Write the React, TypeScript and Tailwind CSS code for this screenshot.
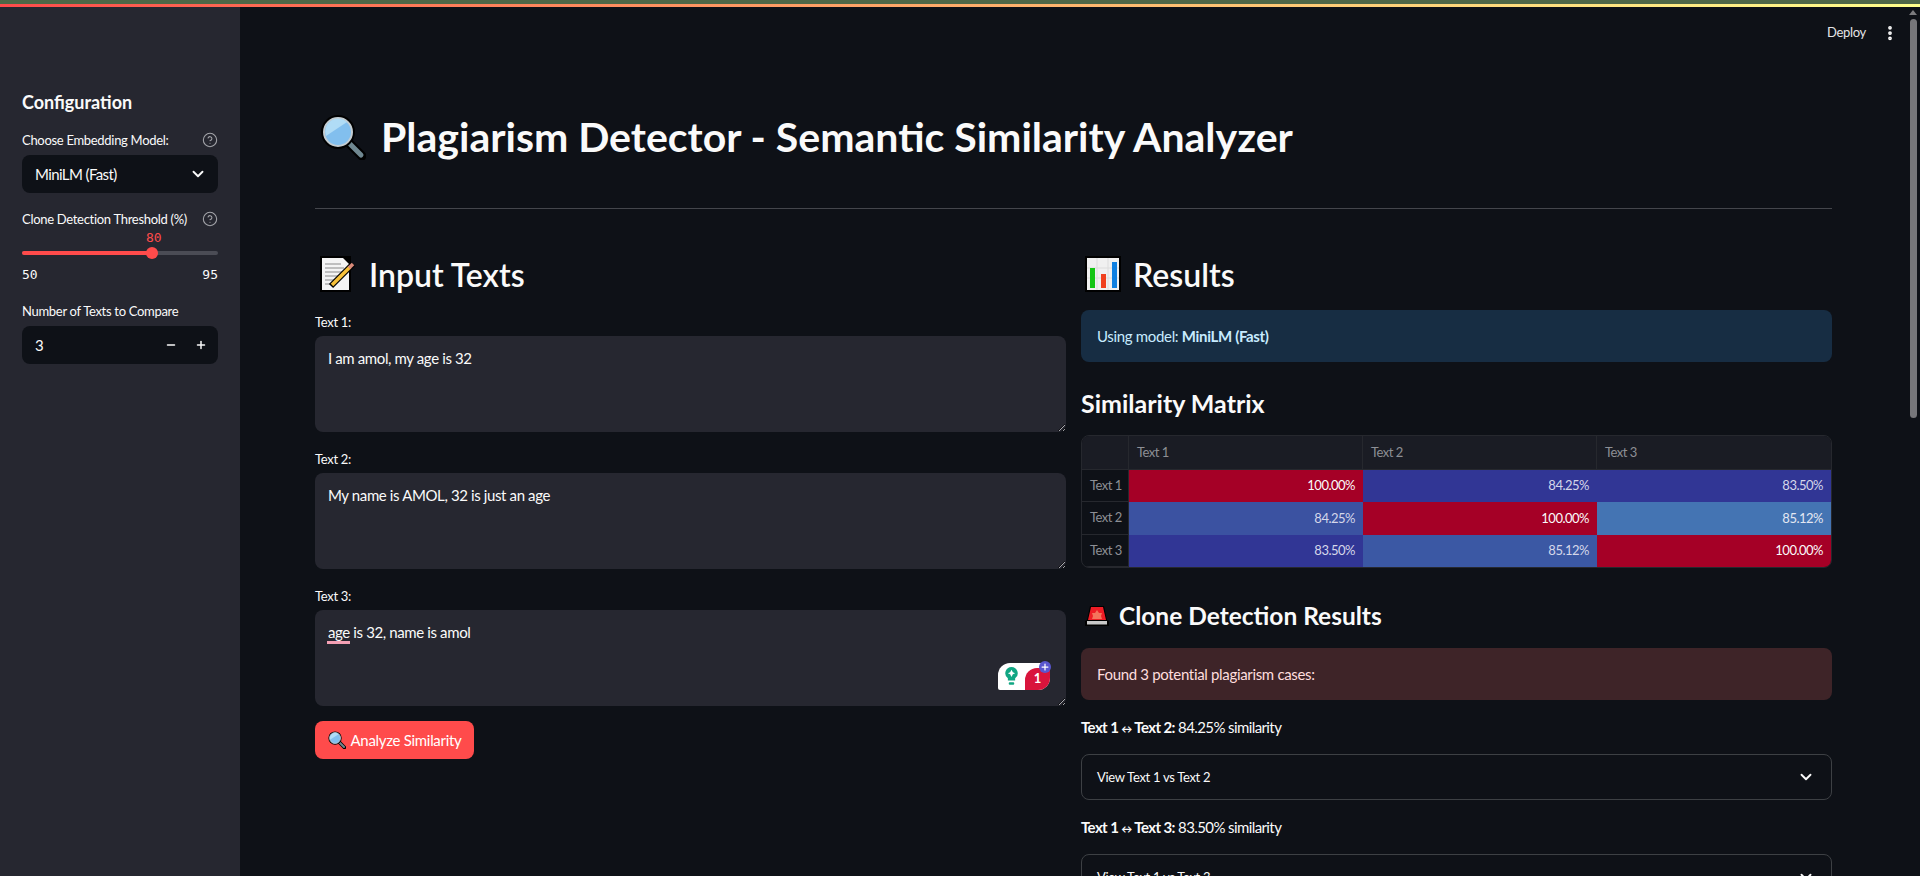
import { ChevronDown, CircleHelp, EllipsisVertical, Minus, Plus } from "lucide-react";

const sans = "font-['Lato','Noto_Sans',sans-serif]";

function SearchEmoji({ size }: { size: number }) {
  return (
    <svg width={size} height={size} viewBox="0 0 46 46" className="shrink-0">
      <path d="M29 29 L42 42" stroke="#000" strokeWidth="9" strokeLinecap="round" />
      <path d="M30 30 L41 41" stroke="#6f8790" strokeWidth="5" strokeLinecap="round" />
      <circle cx="18" cy="18" r="17" fill="#000" />
      <circle cx="18" cy="18" r="14" fill="#82bfee" stroke="#c4cdd2" strokeWidth="2" />
      <path d="M6 22 A13 13 0 0 1 27 8 Z" fill="#b0dcf6" />
    </svg>
  );
}

function MemoEmoji() {
  return (
    <svg width="38" height="38" viewBox="0 0 38 38" className="shrink-0">
      <rect x="1" y="1" width="31" height="36" fill="#000" />
      <path d="M3 3 H24 L30 9 V35 H3 Z" fill="#f4f4f4" />
      <path d="M6 9 H22 M6 13 H25 M6 17 H25 M6 21 H25 M6 25 H18 M6 29 H14" stroke="#8a8a8a" strokeWidth="1" />
      <path d="M12 31 L34 9" stroke="#000" strokeWidth="6" />
      <path d="M13 30 L31 12" stroke="#f8c23a" strokeWidth="3.5" />
      <path d="M30 13 L34 9" stroke="#d98a7a" strokeWidth="3.5" />
    </svg>
  );
}

function ChartEmoji() {
  return (
    <svg width="36" height="36" viewBox="0 0 36 36" className="shrink-0">
      <rect width="36" height="36" fill="#000" />
      <rect x="2" y="2" width="32" height="32" fill="#f0f0f0" />
      <path d="M2 12 H34 M2 22 H34 M12 2 V34 M23 2 V34" stroke="#dcdcdc" strokeWidth="1" />
      <rect x="5" y="12" width="5" height="20" fill="#14c514" />
      <rect x="16" y="18" width="5" height="14" fill="#f0401e" />
      <rect x="27" y="6" width="5" height="26" fill="#0f7fe0" />
    </svg>
  );
}

function SirenEmoji() {
  return (
    <svg width="26" height="22" viewBox="0 0 26 22" className="shrink-0">
      <path d="M1 21 V16 L3 15 L6 1 H20 L23 15 L25 16 V21 Z" fill="#000" />
      <path d="M4 15 L7 2 H19 L22 15 Z" fill="#ee1c25" />
      <path d="M13 5 L15 8 L18 8 L17 11 L18 14 H8 L9 11 L8 8 L11 8 Z" fill="#f5735c" />
      <rect x="3" y="16" width="20" height="3.5" fill="#c8c8c8" />
    </svg>
  );
}

function Label({ children, help }: { children: React.ReactNode; help?: boolean }) {
  return (
    <div className="flex h-[21px] items-center justify-between text-[13px] leading-[21px] tracking-[-0.3px] text-[#fafafa]">
      <span className="pt-[2px]">{children}</span>
      {help && <CircleHelp size={16} strokeWidth={1.6} className="text-[#a3a4a9]" />}
    </div>
  );
}

function TextBox({ label, value, children }: { label: string; value: string; children?: React.ReactNode }) {
  return (
    <div className="flex flex-col">
      <div className="mb-[4px] flex h-[21px] items-center pt-[2px] text-[13px] tracking-[-0.3px] text-[#fafafa]">{label}</div>
      <div className="relative h-[96px]">
        <textarea
          defaultValue={value}
          spellCheck={false}
          className="block h-full w-full rounded-lg bg-[#262730] px-[13px] pb-[13px] pt-[11px] text-[15px] leading-[22px] tracking-[-0.38px] text-[#fafafa] outline-none"
        />
        {children}
      </div>
    </div>
  );
}

function GrammarlyBadge() {
  return (
    <div className="absolute bottom-[16px] right-[16px] flex h-[27px] w-[52px] items-end justify-between rounded-tl-[12px] rounded-br-[12px] rounded-tr-[3px] rounded-bl-[2px] bg-white">
      <svg width="15" height="20" viewBox="0 0 16 22" className="mb-[4px] ml-[6px]">
        <path d="M8 1 a7 7 0 0 1 4 12.6 V16 H4 V13.6 A7 7 0 0 1 8 1 Z" fill="#11a683" />
        <path d="M8 4 L9.5 7 L12 8 L9.5 9 L8 12 L6.5 9 L4 8 L6.5 7 Z" fill="#fff" />
        <rect x="5" y="18" width="6" height="2.5" rx="1" fill="#11a683" />
      </svg>
      <div className="flex h-[22px] w-[25px] items-center justify-center rounded-tl-[12px] rounded-br-[12px] bg-[#d9143c] text-[13px] font-bold text-white">1</div>
      <div className="absolute -right-[1px] -top-[2px] flex h-[12px] w-[12px] items-center justify-center rounded-full bg-[#5a57d0]">
        <Plus size={10} strokeWidth={3} className="text-white" />
      </div>
    </div>
  );
}

function Sidebar() {
  return (
    <aside className="flex w-[240px] shrink-0 flex-col bg-[#262730] px-[22px] pt-[81px]">
      <h2 className="mb-[13px] text-[18px] font-bold leading-[28px] text-[#fafafa]">Configuration</h2>
      <div className="mb-[5px]">
        <Label help>Choose Embedding Model:</Label>
      </div>
      <div className="flex h-[38px] items-center justify-between rounded-lg bg-[#0e1117] pl-[13px] pr-[11px] text-[15px] tracking-[-0.6px] text-[#fafafa]">
        <span>MiniLM (Fast)</span>
        <ChevronDown size={18} strokeWidth={2.5} />
      </div>
      <div className="mt-[15px]">
        <Label help>Clone Detection Threshold (%)</Label>
      </div>
      <div className="relative h-[27px]">
        <span className="absolute left-[124px] top-0 font-['DejaVu_Sans_Mono',monospace] text-[13px] leading-[17px] text-[#ff4b4b]">80</span>
        <div className="absolute left-0 right-0 top-[22px] h-[4px] rounded-full bg-[#4b4c55]">
          <div className="h-full w-[130px] rounded-full bg-[#ff4b4b]" />
        </div>
        <div className="absolute left-[124px] top-[18px] h-[12px] w-[12px] rounded-full bg-[#ff4b4b]" />
      </div>
      <div className="mt-[10px] flex justify-between font-['DejaVu_Sans_Mono',monospace] text-[13px] leading-[17px] text-[#fafafa]">
        <span>50</span>
        <span>95</span>
      </div>
      <div className="mb-[5px] mt-[17px]">
        <Label>Number of Texts to Compare</Label>
      </div>
      <div className="flex h-[38px] items-center rounded-lg bg-[#0e1117] pl-[13px] pr-[11px] text-[15px] text-[#fafafa]">
        <span className="flex-1">3</span>
        <Minus size={12} strokeWidth={3} className="mr-[18px]" />
        <Plus size={12} strokeWidth={3} />
      </div>
    </aside>
  );
}

const matrix = [
  { name: "Text 1", cells: [["100.00%", "bg-[#a50026] text-[#fafafa]"], ["84.25%", "bg-[#313695] text-[#d5d7ea]"], ["83.50%", "bg-[#313695] text-[#d5d7ea]"]] },
  { name: "Text 2", cells: [["84.25%", "bg-[#3b52a1] text-[#d5d7ea]"], ["100.00%", "bg-[#a50026] text-[#fafafa]"], ["85.12%", "bg-[#4474b3] text-[#e3e7f2]"]] },
  { name: "Text 3", cells: [["83.50%", "bg-[#313695] text-[#d5d7ea]"], ["85.12%", "bg-[#3b58a4] text-[#d5d7ea]"], ["100.00%", "bg-[#a50026] text-[#fafafa]"]] },
];

function Matrix() {
  return (
    <div className="flex h-[133px] flex-col overflow-hidden rounded-lg border border-[#26282e] text-[13px] tracking-[-0.5px] text-[#b0b2b6]">
      <div className="grid h-[34px] shrink-0 grid-cols-[47px_1fr_1fr_1fr] items-stretch border-b border-[#26282e] bg-[#1a1c24]">
        <div className="border-r border-[#26282e]" />
        {["Text 1", "Text 2", "Text 3"].map((h) => (
          <div key={h} className="flex items-center border-r border-[#26282e] pl-[8px] text-[#8d8f95] last:border-r-0">{h}</div>
        ))}
      </div>
      {matrix.map((row) => (
        <div key={row.name} className="grid flex-1 grid-cols-[47px_1fr_1fr_1fr]">
          <div className="flex items-center border-b border-r border-[#26282e] pl-[8px] text-[#8d8f95]">{row.name}</div>
          {row.cells.map(([v, cls], i) => (
            <div key={i} className={`flex items-center justify-end pr-[8px] ${cls}`}>{v}</div>
          ))}
        </div>
      ))}
    </div>
  );
}

function CloneCase({ a, b, pct }: { a: string; b: string; pct: string }) {
  return (
    <>
      <p className="mt-[15px] h-[24px] shrink-0 text-[15px] leading-[24px] tracking-[-0.6px] text-[#fafafa]">
        <b>{a} <span className="text-[11px]">↔</span> {b}:</b> {pct} similarity
      </p>
      <div className="mt-[15px] flex h-[46px] shrink-0 items-center justify-between rounded-lg border border-[#3d4044] pl-[15px] pr-[16px] text-[13px] tracking-[-0.3px] text-[#fafafa]">
        <span className="pt-[1px]">View {a} vs {b}</span>
        <ChevronDown size={18} strokeWidth={2.5} />
      </div>
    </>
  );
}

export default function App() {
  return (
    <div className={`flex h-screen flex-col overflow-hidden bg-[#0e1117] ${sans}`}>
      <div className="h-[4px] shrink-0 bg-[#4f6747]" />
      <div className="h-[3px] shrink-0 bg-gradient-to-r from-[#ff4b4b] to-[#ffff8c]" />
      <div className="flex min-h-0 flex-1">
        <Sidebar />
        <main className="relative min-w-0 flex-1 overflow-hidden pl-[75px] pr-[88px]">
          <div className="absolute right-[21px] top-[16px] flex items-center gap-[15px] text-[13px] tracking-[-0.3px] text-[#e4e4e6]">
            <span>Deploy</span>
            <EllipsisVertical size={18} strokeWidth={3} className="text-white" />
          </div>
          <div className="absolute right-[3px] top-[3px] flex flex-col items-center">
            <div className="h-0 w-0 border-x-[4px] border-b-[5px] border-x-transparent border-b-[#7b7b7e]" />
            <div className="mt-[4px] h-[399px] w-[7px] rounded-full bg-[#76767a]" />
          </div>

          <div className="flex h-[202px] items-start border-b border-[#44464c] pt-[108px]">
            <div className="-mt-[3px] ml-[5px] flex items-center gap-[15px]">
              <SearchEmoji size={46} />
              <h1 className="text-[41px] font-bold leading-[50px] text-[#fafafa]">Plagiarism Detector - Semantic Similarity Analyzer</h1>
            </div>
          </div>

          <div className="mt-[45px] grid grid-cols-2 gap-[15px]">
            <section className="flex flex-col">
              <div className="flex h-[40px] items-center gap-[12px] pl-[4px]">
                <MemoEmoji />
                <h2 className="pt-[2px] text-[32px] font-semibold text-[#fafafa]">Input Texts</h2>
              </div>
              <div className="mt-[17px] flex flex-col gap-[16px]">
                <TextBox label="Text 1:" value="I am amol, my age is 32" />
                <TextBox label="Text 2:" value="My name is AMOL, 32 is just an age" />
                <TextBox label="Text 3:" value="age is 32, name is amol">
                  <div className="absolute left-[12px] top-[31px] h-[3px] w-[23px] bg-[#f4a0b4]" />
                  <GrammarlyBadge />
                </TextBox>
              </div>
              <button className="mt-[15px] flex h-[38px] w-[159px] items-center justify-center gap-[5px] rounded-lg bg-[#ff4b4b] text-[15px] tracking-[-0.3px] text-white">
                <SearchEmoji size={18} />
                Analyze Similarity
              </button>
            </section>

            <section className="flex min-h-0 flex-col">
              <div className="flex h-[40px] items-center gap-[12px] pl-[4px]">
                <ChartEmoji />
                <h2 className="pt-[2px] text-[32px] font-semibold text-[#fafafa]">Results</h2>
              </div>
              <div className="mt-[16px] flex h-[52px] shrink-0 items-center rounded-lg bg-[#172d43] px-[16px] text-[15px] tracking-[-0.33px] text-[#c7ebff]">
                <span>Using model: <b>MiniLM (Fast)</b></span>
              </div>
              <h3 className="mt-[25px] h-[32px] text-[25px] font-bold leading-[32px] text-[#fafafa]">Similarity Matrix</h3>
              <div className="mt-[16px]">
                <Matrix />
              </div>
              <div className="mt-[32px] flex h-[32px] items-center gap-[9px] pl-[3px]">
                <SirenEmoji />
                <h3 className="text-[24.5px] font-bold text-[#fafafa]">Clone Detection Results</h3>
              </div>
              <div className="mt-[16px] flex h-[52px] shrink-0 items-center rounded-lg bg-[#3e2428] px-[16px] text-[15px] tracking-[-0.33px] text-[#ffdede]">
                Found 3 potential plagiarism cases:
              </div>
              <CloneCase a="Text 1" b="Text 2" pct="84.25%" />
              <CloneCase a="Text 1" b="Text 3" pct="83.50%" />
            </section>
          </div>
        </main>
      </div>
    </div>
  );
}
